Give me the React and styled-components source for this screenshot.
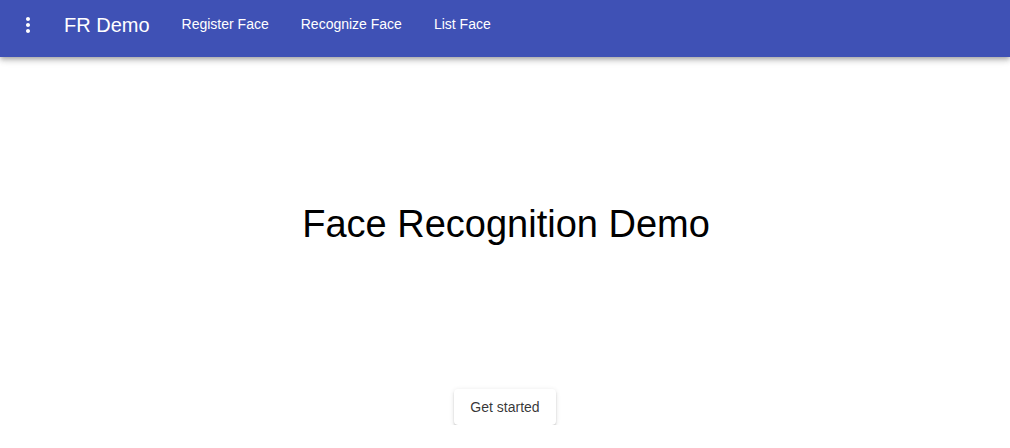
import React from 'react';
import styled, { createGlobalStyle } from 'styled-components';

const GlobalStyle = createGlobalStyle`
    body {
        margin: 0;
        font-family: "Liberation Sans", Arial, sans-serif;
        background: #fff;
    }
`;

const AppBar = styled.header`
    position: relative;
    z-index: 2;
    height: 57px;
    background: #3f51b5;
    color: #fff;
    box-shadow: 0px 2px 4px -1px rgba(0,0,0,0.2), 0px 4px 5px 0px rgba(0,0,0,0.14), 0px 1px 10px 0px rgba(0,0,0,0.12);
`;

const Toolbar = styled.div`
    display: flex;
    align-items: center;
    height: 49px;
    padding: 0 16px;
`;

const IconButton = styled.button`
    display: flex;
    align-items: center;
    justify-content: center;
    padding: 12px;
    margin: 0 12px 0 -12px;
    border: none;
    background: transparent;
    color: inherit;
    cursor: pointer;
`;

const Title = styled.h1`
    margin: 0;
    font-size: 20px;
    font-weight: 400;
    line-height: 1.6;
`;

const Nav = styled.nav`
    display: flex;
    margin-left: 16px;
`;

const NavButton = styled.a`
    padding: 6px 16px;
    font-size: 14px;
    line-height: 1.75;
    color: #fff;
    text-decoration: none;
    cursor: pointer;
`;

const Main = styled.main`
    display: flex;
    flex-direction: column;
    align-items: center;
`;

const Heading = styled.h2`
    margin: 144px 0 0 2px;
    font-size: 38px;
    font-weight: 400;
    line-height: 46px;
    color: #000;
`;

const StartButton = styled.button`
    margin-top: 142px;
    height: 36px;
    padding: 6px 16px;
    border: none;
    border-radius: 4px;
    background: #fff;
    color: rgba(0,0,0,0.8);
    font-family: "Liberation Sans", Arial, sans-serif;
    font-size: 14px;
    cursor: pointer;
    box-shadow: 0px 3px 1px -2px rgba(0,0,0,0.2), 0px 2px 2px 0px rgba(0,0,0,0.14), 0px 1px 5px 0px rgba(0,0,0,0.12);
`;

function MoreVert() {
    return (
        <svg width="24" height="24" viewBox="0 0 24 24" fill="currentColor">
            <path d="M12 8c1.1 0 2-.9 2-2s-.9-2-2-2-2 .9-2 2 .9 2 2 2zm0 2c-1.1 0-2 .9-2 2s.9 2 2 2 2-.9 2-2-.9-2-2-2zm0 6c-1.1 0-2 .9-2 2s.9 2 2 2 2-.9 2-2-.9-2-2-2z" />
        </svg>
    );
}

export default function App() {
    return (
        <>
            <GlobalStyle />
            <AppBar>
                <Toolbar>
                    <IconButton aria-label="menu"><MoreVert /></IconButton>
                    <Title>FR Demo</Title>
                    <Nav>
                        <NavButton>Register Face</NavButton>
                        <NavButton>Recognize Face</NavButton>
                        <NavButton>List Face</NavButton>
                    </Nav>
                </Toolbar>
            </AppBar>
            <Main>
                <Heading>Face Recognition Demo</Heading>
                <StartButton>Get started</StartButton>
            </Main>
        </>
    );
}
